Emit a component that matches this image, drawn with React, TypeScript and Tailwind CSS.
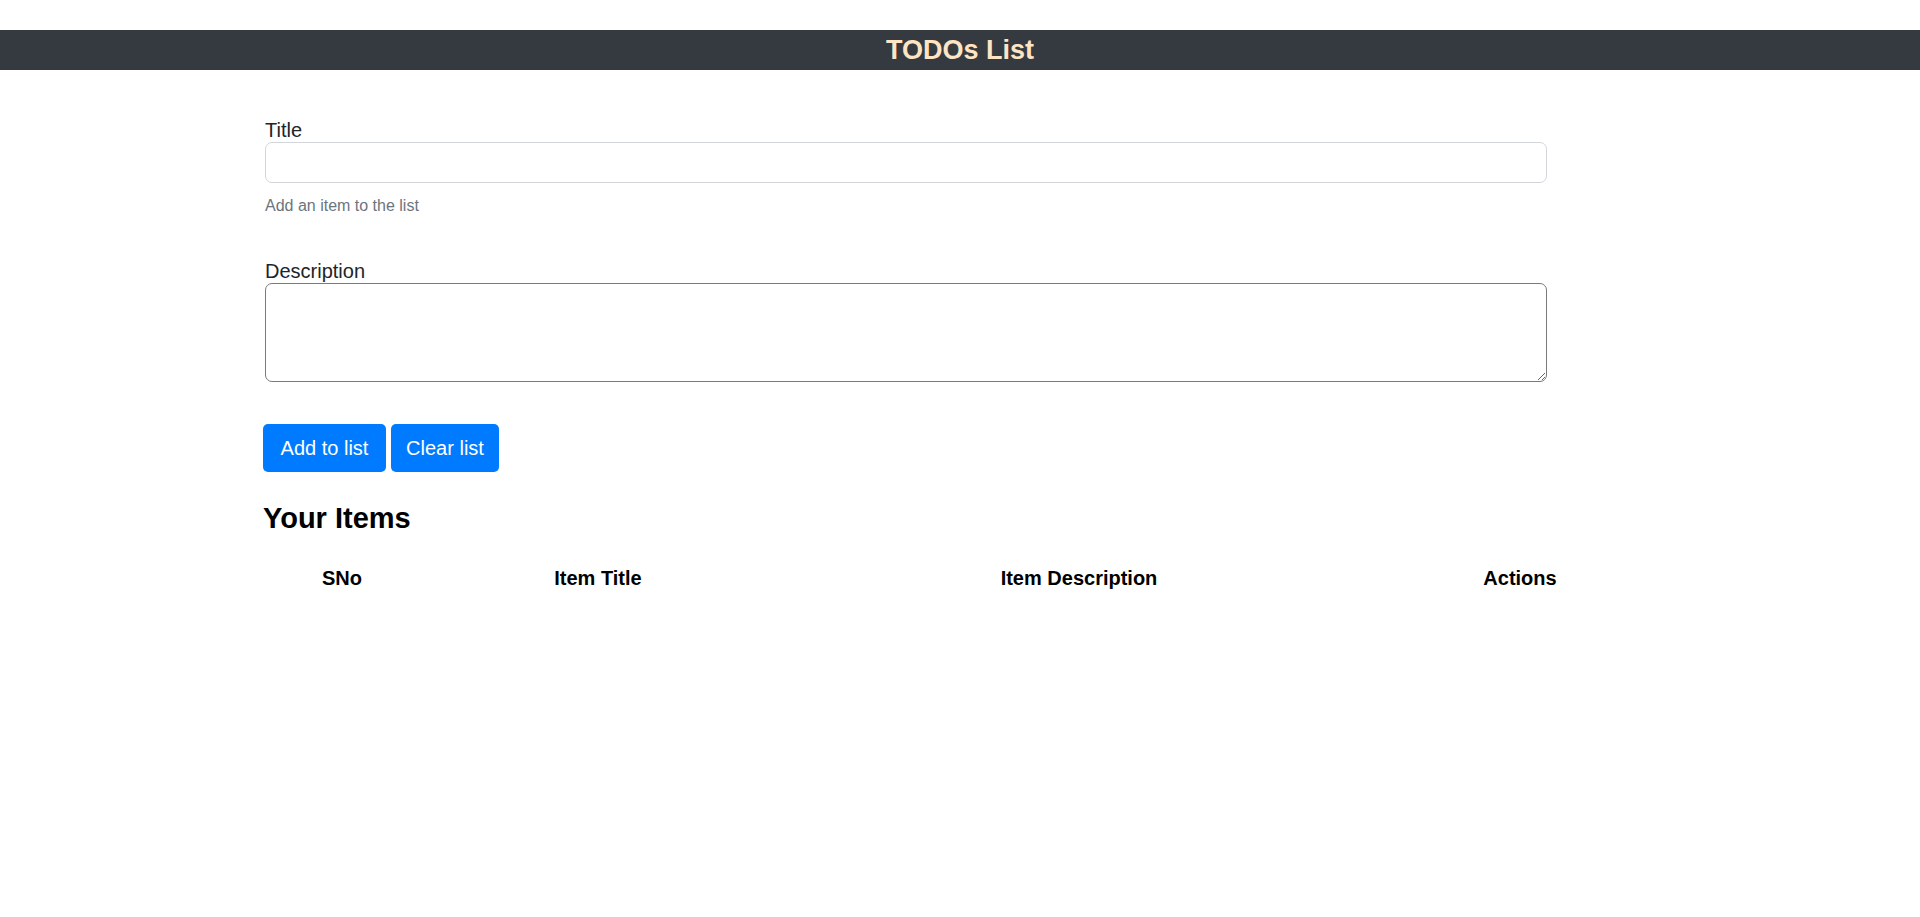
import { useState } from "react";

export default function App() {
  const [title, setTitle] = useState("");
  const [desc, setDesc] = useState("");

  return (
    <div className="min-h-screen bg-white pt-[30px] font-['Liberation_Sans',Arial,sans-serif] text-[#212529]">
      {/* NAV */}
      <div className="h-[40px] bg-[#343a40] flex items-center justify-center">
        <h1 className="text-[27px] font-bold leading-[40px] text-[#ffe4c4]">TODOs List</h1>
      </div>

      {/* FORM */}
      <div className="ml-[263px] w-[1300px]">
        <div className="ml-[2px] w-[1282px] pt-[48px]">
          <label className="block text-[20px] leading-[24px]">Title</label>
          <input
            value={title}
            onChange={(e) => setTitle(e.target.value)}
            className="block w-full h-[41px] border border-[#d2d6da] rounded-[7px] px-3 text-[20px] outline-none"
          />
          <p className="mt-[11px] text-[16px] leading-[24px] text-[#6c757d]">Add an item to the list</p>

          <label className="block mt-[41px] text-[20px] leading-[24px]">Description</label>
          <textarea
            value={desc}
            onChange={(e) => setDesc(e.target.value)}
            className="block w-full h-[99px] border border-[#7a7a7a] rounded-[7px] px-2 py-1 text-[16px] outline-none"
          />
        </div>

        {/* BUTTONS */}
        <div className="flex gap-[5px] mt-[42px]">
          <button className="w-[123px] h-[48px] bg-[#007bff] text-white text-[20px] rounded-[5px]">Add to list</button>
          <button className="w-[108px] h-[48px] bg-[#007bff] text-white text-[20px] rounded-[5px]">Clear list</button>
        </div>

        {/* ITEMS */}
        <h3 className="mt-[30px] text-[29px] leading-[32px] font-bold text-black">Your Items</h3>

        <div className="mt-[32px] grid grid-cols-[158px_354px_608px_274px] text-[20px] leading-[24px] font-bold text-black">
          <div className="text-center">SNo</div>
          <div className="text-center">Item Title</div>
          <div className="text-center">Item Description</div>
          <div className="text-center">Actions</div>
        </div>
      </div>
    </div>
  );
}
